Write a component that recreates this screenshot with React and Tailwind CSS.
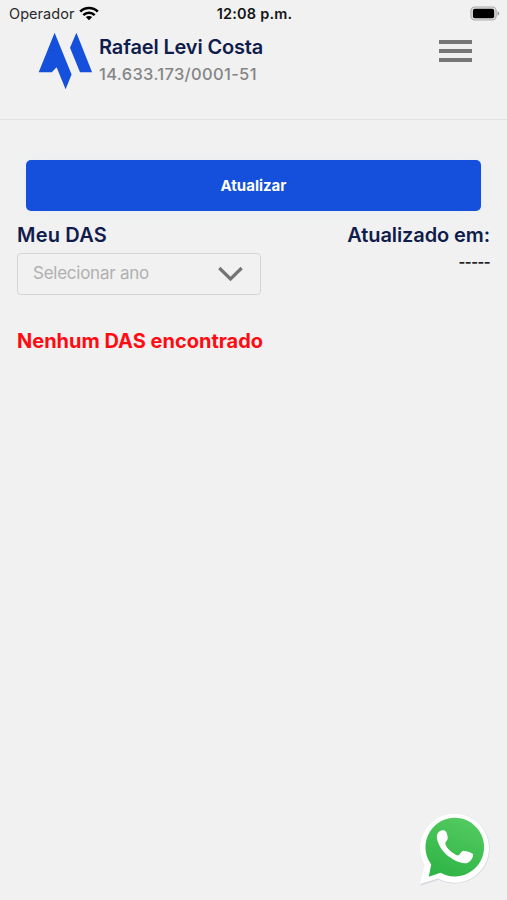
function StatusBar() {
  return (
    <div className="flex h-[27px] items-center justify-between pl-[9px] pr-[7px] text-[15px] leading-[27px]">
      <div className="flex w-[162px] items-center gap-[5px] text-[#292929]">
        <span className="text-[14.5px] tracking-[0.05px]">Operador</span>
        <svg width="20" height="15" viewBox="0 0 20 15" fill="none" stroke="#000" strokeWidth="2.6" className="-mt-px">
          <path d="M1.2 5.7C6 .8 14 .8 18.8 5.7" />
          <path d="M4.3 9.1C7.5 6 12.5 6 15.7 9.1" />
          <path d="M10 14.3L6.8 11.1C8.5 9.5 11.5 9.5 13.2 11.1Z" fill="#000" stroke="none" />
        </svg>
      </div>
      <span className="whitespace-nowrap text-[14.5px] font-semibold tracking-[0.2px] text-[#151515]">12:08 p.m.</span>
      <div className="flex w-[162px] justify-end">
        <svg width="30" height="15" viewBox="0 0 31 15" className="-mt-px">
          <rect x="1" y="0.8" width="26" height="13.4" rx="4" fill="#e5e5e5" stroke="#aaa" strokeWidth="1.2" />
          <rect x="3" y="2.7" width="22" height="9.6" rx="2" fill="#000" />
          <path d="M28.5 5.2C30.8 6 30.8 9 28.5 9.8Z" fill="#999" />
        </svg>
      </div>
    </div>
  );
}

function Header() {
  return (
    <header className="flex h-[92.5px] items-start border-b border-[#e3e3e3] pl-[38px] pr-[35px]">
      <svg width="55" height="58" viewBox="0 0 55 58" className="mt-[5px]" fill="#1450db">
        <path d="M16.6 0.8L33.6 42.5L27.6 57.3L18.6 35.2L13.8 40.2H0.7Z" />
        <path d="M38.4 0.8L54.1 40.2H42L32 15.8Z" />
      </svg>
      <div className="ml-[6px] flex flex-col pt-[7px]">
        <h1 className="h-[27px] whitespace-nowrap text-[20px] font-semibold leading-[27px] tracking-[-0.15px] text-[#101c4b]">Rafael Levi Costa</h1>
        <p className="h-[27px] whitespace-nowrap text-[16.5px] font-medium leading-[27px] tracking-[0.33px] text-[#858585]">14.633.173/0001-51</p>
      </div>
      <button aria-label="Menu" className="ml-auto mt-[13px] flex flex-col gap-[5px]">
        <span className="h-1 w-[33px] bg-[#777]" />
        <span className="h-1 w-[33px] bg-[#777]" />
        <span className="h-1 w-[33px] bg-[#777]" />
      </button>
    </header>
  );
}

function WhatsApp() {
  return (
    <button aria-label="WhatsApp" className="absolute left-[415px] top-[809px]">
      <svg width="80" height="80" viewBox="0 0 80 80">
        <defs>
          <linearGradient id="green" x1="0.7" y1="0" x2="0.3" y2="1">
            <stop offset="0" stopColor="#53cb60" />
            <stop offset="1" stopColor="#2fb446" />
          </linearGradient>
        </defs>
        <path d="M6 76L10.5 58A35 35 0 1 1 24 70.3Z" fill="#b8bfcc" opacity=".5" transform="translate(-.3 .4)" />
        <path d="M5 75L9.5 56.5A34.6 34.6 0 1 1 23 69.6Z" fill="#fff" />
        <path d="M13.8 67.8L16.2 55.5A29.3 29.3 0 1 1 25.5 63.7Z" fill="url(#green)" />
        <path d="M24.6 22.2C26.3 20.9 29.6 20.6 31 22.7C32.4 25 32.9 28 32.6 30C32.3 31.7 30 33 30.3 34.8C31.6 39.4 37 44.4 42.4 46.4C44.8 47 46 42.1 48.6 41.8C51.5 42.1 56.8 43.5 58 45.2C58.6 48.3 55.6 52.7 52.4 53.9C46.6 55.3 39.2 51.5 34.5 48.1C28 43.2 22.6 35.4 21.9 28.4C21.8 25.7 22.7 23.6 24.6 22.2Z" fill="#fff" />
      </svg>
    </button>
  );
}

export default function App() {
  return (
    <div className="relative h-[900px] w-[507px] overflow-hidden bg-[#f1f1f1] font-['Inter','Liberation_Sans',sans-serif]">
      <StatusBar />
      <Header />
      <main className="px-[17px] pt-[40.5px]">
        <button className="mx-[9px] flex h-[51px] w-[455px] items-center justify-center rounded-[5px] bg-[#1450db] pt-[2px] text-[15px] font-bold text-white shadow-[0_0_14px_#e8edf1]">
          Atualizar
        </button>
        <section className="mt-[11px] flex justify-between">
          <div>
            <h2 className="h-[26px] whitespace-nowrap text-[20px] font-semibold leading-[26px] tracking-[0.2px] text-[#101c4b]">Meu DAS</h2>
            <button className="mt-[5px] flex h-[42px] w-[244px] items-center justify-between rounded-[4px] border border-[#d5d5d5] pl-[15px] pr-[17px] text-[17px] tracking-[-0.25px] text-[#b0b0b0]">
              <span>Selecionar ano</span>
              <svg width="25" height="16" viewBox="0 0 25 16" fill="none" stroke="#747474" strokeWidth="3.2">
                <path d="M1.3 2L12.5 13L23.7 2" />
              </svg>
            </button>
          </div>
          <div className="text-right">
            <h2 className="h-[26px] whitespace-nowrap text-[20px] font-semibold leading-[26px] tracking-[-0.1px] text-[#101c4b]">Atualizado em:</h2>
            <p className="text-[14.5px] font-bold leading-[27px] tracking-[-0.5px] text-[#222]">-----</p>
          </div>
        </section>
        <p className="mt-[33px] whitespace-nowrap text-[20px] font-bold leading-[26px] text-[#ff0b12]">Nenhum DAS encontrado</p>
      </main>
      <WhatsApp />
    </div>
  );
}
